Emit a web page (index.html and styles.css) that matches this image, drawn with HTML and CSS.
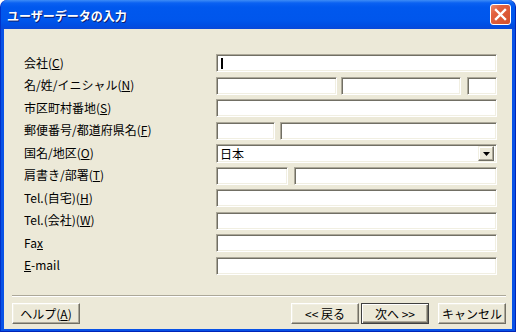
FILE: index.html
```html
<!DOCTYPE html>
<html lang="ja">
<head>
    <meta charset="UTF-8">
    <title>ユーザーデータの入力</title>
    <link rel="stylesheet" href="styles.css">
</head>
<body>
    <div class="window">
        <!-- Title bar -->
        <div class="titlebar">
            <span class="title">ユーザーデータの入力</span>
            <button class="close" aria-label="閉じる">
                <svg viewBox="0 0 21 21" width="21" height="21">
                    <path d="M6 6l9 9M15 6l-9 9" stroke="#fff" stroke-width="2.4" stroke-linecap="square"></path>
                </svg>
            </button>
        </div>

        <div class="client">
            <!-- Form rows -->
            <div class="form">
                <label>会社(<u>C</u>)</label>
                <div class="field"><span class="input grow"><span class="caret"></span></span></div>

                <label>名/姓/イニシャル(<u>N</u>)</label>
                <div class="field">
                    <span class="input w121"></span>
                    <span class="input w120 gap4"></span>
                    <span class="input grow gap6"></span>
                </div>

                <label>市区町村番地(<u>S</u>)</label>
                <div class="field"><span class="input grow"></span></div>

                <label>郵便番号/都道府県名(<u>F</u>)</label>
                <div class="field">
                    <span class="input w59"></span>
                    <span class="input grow gap5"></span>
                </div>

                <label>国名/地区(<u>O</u>)</label>
                <div class="field">
                    <span class="input combo grow">
                        <span class="combo-text">日本</span>
                        <span class="combo-btn">
                            <svg viewBox="0 0 7 4" width="7" height="4"><path d="M0 0h7L3.5 4z" fill="#000"></path></svg>
                        </span>
                    </span>
                </div>

                <label>肩書き/部署(<u>T</u>)</label>
                <div class="field">
                    <span class="input w72"></span>
                    <span class="input grow gap6"></span>
                </div>

                <label>Tel.(自宅)(<u>H</u>)</label>
                <div class="field"><span class="input grow"></span></div>

                <label>Tel.(会社)(<u>W</u>)</label>
                <div class="field"><span class="input grow"></span></div>

                <label>Fa<u>x</u></label>
                <div class="field"><span class="input grow"></span></div>

                <label><u>E</u>-mail</label>
                <div class="field"><span class="input grow"></span></div>
            </div>

            <div class="separator"></div>

            <!-- Buttons -->
            <div class="buttons">
                <button class="btn">ヘルプ(<u>A</u>)</button>
                <span class="spacer"></span>
                <button class="btn">&lt;&lt; 戻る</button>
                <button class="btn default">次へ &gt;&gt;</button>
                <button class="btn cancel">キャンセル</button>
            </div>
        </div>
    </div>
</body>
</html>
```

FILE: styles.css
```css
html, body {
    margin: 0;
    padding: 0;
}

body {
    width: 516px;
    height: 332px;
    overflow: hidden;
    font-family: "Noto Sans CJK JP", "Liberation Sans", sans-serif;
    font-size: 12px;
    color: #000;
}

.window {
    width: 516px;
    height: 332px;
    display: flex;
    flex-direction: column;
    background: #0852E6;
    border-radius: 7px 7px 0 0;
    box-sizing: border-box;
    border-left: 1px solid #0031C8;
    border-right: 1px solid #0024B8;
    border-bottom: 1px solid #0024B8;
}

/* Title bar */
.titlebar {
    height: 29px;
    flex: none;
    display: flex;
    align-items: center;
    padding: 0 3px 0 6px;
    border-radius: 7px 7px 0 0;
    background: linear-gradient(#3D8CF6 0, #0A61F2 3px, #0058EE 7px, #0056EC 20px, #004FE4 25px, #0A48D8 29px);
}

.title {
    flex: 1;
    color: #fff;
    font-weight: bold;
    font-size: 12px;
    text-shadow: 1px 1px 0 #0A1C6E;
    margin-top: 1px;
}

.close {
    width: 21px;
    height: 21px;
    padding: 0;
    margin-right: 1px;
    border: 1px solid #fff;
    border-radius: 3px;
    background: linear-gradient(135deg, #F08A6A 0, #E2613F 30%, #D4502C 100%);
    display: flex;
    align-items: center;
    justify-content: center;
}

.close svg {
    display: block;
    margin: -1px;
}

/* Client area */
.client {
    flex: 1;
    display: flex;
    flex-direction: column;
    margin: 0 3px 2px 3px;
    background: #ECE9D8;
}

.form {
    display: grid;
    grid-template-columns: 192px 1fr;
    grid-auto-rows: 18px;
    row-gap: 4.5px;
    padding: 25px 15px 0 20px;
}

.form label {
    display: flex;
    align-items: center;
    white-space: nowrap;
    margin-top: -2px;
}

.field {
    display: flex;
}

.input {
    display: block;
    box-sizing: border-box;
    height: 18px;
    background: #fff;
    border: 1px solid;
    border-color: #ACA899 #fff #fff #ACA899;
    box-shadow: inset 1px 1px 0 #716F64, inset -1px -1px 0 #F1EFE2;
    position: relative;
}

.grow { flex: 1; }
.w121 { width: 121px; }
.w120 { width: 120px; }
.w59 { width: 59px; }
.w72 { width: 72px; }
.gap4 { margin-left: 4px; }
.gap5 { margin-left: 5px; }
.gap6 { margin-left: 6px; }

.caret {
    position: absolute;
    left: 4px;
    top: 3px;
    width: 2px;
    height: 11px;
    background: #000;
}

.combo {
    height: 19px;
    display: flex;
    align-items: center;
    padding: 2px;
}

.combo-text {
    flex: 1;
    padding-left: 1px;
    line-height: 15px;
}

.combo-btn {
    width: 16px;
    height: 15px;
    box-sizing: border-box;
    display: flex;
    align-items: center;
    justify-content: center;
    background: #ECE9D8;
    border: 1px solid;
    border-color: #F1EFE2 #716F64 #716F64 #F1EFE2;
    box-shadow: inset -1px -1px 0 #ACA899, inset 1px 1px 0 #fff;
}

.separator {
    margin: 20px 6px 0 8px;
    height: 1px;
    background: #ACA899;
    border-bottom: 1px solid #fff;
}

.buttons {
    display: flex;
    align-items: center;
    padding: 6px 6px 0 8px;
}

.spacer {
    flex: 1;
}

.btn {
    height: 21px;
    width: 68px;
    padding: 0;
    box-sizing: border-box;
    font-family: inherit;
    font-size: 12px;
    color: #000;
    background: #ECE9D8;
    border: 1px solid;
    border-color: #fff #716F64 #716F64 #fff;
    box-shadow: inset -1px -1px 0 #ACA899, inset 1px 1px 0 #F1EFE2;
}

.btn.default {
    margin-left: 2px;
    border-color: #404040;
    box-shadow: inset 1px 1px 0 #fff, inset -1px -1px 0 #716F64, inset -2px -2px 0 #ACA899;
}

.btn.cancel {
    margin-left: 9px;
}
```
